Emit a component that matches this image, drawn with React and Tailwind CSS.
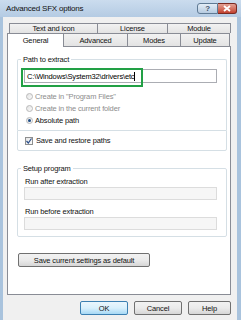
import React from "react";

const FONT = "font-['Liberation_Sans',Arial,sans-serif]";

function Radio({ label, checked, disabled }) {
  return (
    <div className="flex items-center h-[12px] pl-[8px]">
      <span className="w-[7px] h-[7px] rounded-full border border-[#b9b9b9] bg-gradient-to-br from-[#e3e3e3] to-[#fbfbfb] flex items-center justify-center">
        {checked && <span className="w-[3px] h-[3px] rounded-full bg-[#1f4d86]" />}
      </span>
      <span className={`ml-[2px] ${disabled ? "text-[#8d8d8d]" : "text-[#111]"}`}>{label}</span>
    </div>
  );
}

function Button({ children, className = "", primary }) {
  return (
    <div
      className={`h-[14px] flex items-center justify-center rounded-[2px] border bg-gradient-to-b ${
        primary
          ? "border-[#3c7fb1] from-[#eaf6fd] via-[#d9f0fc] to-[#a7d9f5]"
          : "border-[#707070] from-[#f2f2f2] via-[#ebebeb] to-[#d6d6d6]"
      } ${className}`}
    >
      {children}
    </div>
  );
}

export default function App() {
  return (
    <div className={`w-[241px] h-[320px] overflow-hidden flex flex-col bg-[#a9c3dd] text-[7.5px] leading-[9px] tracking-[-0.15px] text-[#111] ${FONT}`}>
      {/* Title bar */}
      <div className="h-[17px] flex items-start bg-gradient-to-b from-[#cbdcee] to-[#b4cbe3]">
        <span className="pl-[6px] pt-[4px] text-[8px] leading-[9px] tracking-[-0.2px] text-[#111]">Advanced SFX options</span>
        <div className="ml-auto flex pt-[3px] pr-[4px]">
          <div className="w-[21px] h-[11px] rounded-l-[3px] border border-[#5f7a94] bg-gradient-to-b from-[#e3edf7] to-[#b6cbe0] flex items-center justify-center text-[8px] leading-[8px] text-[#3d536b] font-bold">?</div>
          <div className="w-[19px] h-[11px] rounded-r-[3px] border border-l-0 border-[#7a2a22] bg-gradient-to-b from-[#e3a195] to-[#c2402f] flex items-center justify-center">
            <svg width="8" height="7" viewBox="0 0 8 7">
              <path d="M1 1 L7 6 M7 1 L1 6" stroke="#fff" strokeWidth="1.8" />
            </svg>
          </div>
        </div>
      </div>

      {/* Window body */}
      <div className="flex-1 ml-[3px] mr-[4px] bg-[#f0f0f0] pt-[6px] pl-[4px] pr-[6px]">
        {/* Tabs */}
        <div className="ml-[2px] flex h-[10px]">
          {[["Text and icon", "w-[88px]"], ["License", "w-[70px]"], ["Module", "w-[64px]"]].map(([t, w], i) => (
            <div
              key={t}
              className={`${w} flex items-center justify-center border-t border-l ${i === 2 ? "border-r" : ""} border-[#898c95] bg-gradient-to-b from-[#f2f2f2] to-[#e3e3e3]`}
            >
              {t}
            </div>
          ))}
        </div>
        <div className="ml-[2px] flex h-[13px]">
          <div className="relative z-10 w-[57px] -ml-[2px] h-[14px] flex items-center justify-center border-t border-x border-[#898c95] bg-white pb-[1px]">
            General
          </div>
          {[["Advanced", "w-[63px]"], ["Modes", "w-[53px]"], ["Update", "w-[50px]"]].map(([t, w], i) => (
            <div
              key={t}
              className={`${w} flex items-center justify-center border-t ${i === 0 ? "" : "border-l"} ${i === 2 ? "border-r" : ""} border-[#898c95] bg-gradient-to-b from-[#f2f2f2] to-[#e3e3e3]`}
            >
              {t}
            </div>
          ))}
        </div>

        {/* Panel */}
        <div className="relative h-[249px] border border-[#898c95] bg-white pl-[9px] pr-[3px]">
          {/* Path to extract */}
          <fieldset className="mt-[8px] border border-b-0 border-[#d5dfe5] pb-[4px] rounded-t-[2px]">
            <legend className="ml-[3px] px-[2px] leading-[9px]">Path to extract</legend>
            <div className="mt-[5px] ml-[6px] w-[193px] h-[14px] border border-[#abadb3] bg-white flex items-center pl-[2px] text-[#000]">
              C:\Windows\System32\drivers\etc<span className="w-px h-[9px] bg-black" />
            </div>
            <div className="mt-[7px]">
              <Radio label={'Create in "Program Files"'} disabled />
              <Radio label="Create in the current folder" disabled />
              <Radio label="Absolute path" checked />
            </div>
          </fieldset>
          <div className="h-[21px] border border-[#d5dfe5] rounded-b-[2px] flex items-center pl-[7px]">
            <span className="w-[8px] h-[8px] border border-[#8e8f8f] bg-gradient-to-br from-[#e8e8e8] to-[#fafafa] flex items-center justify-center">
              <svg width="6" height="6" viewBox="0 0 6 6">
                <path d="M0.5 3 L2.3 5 L5.5 0.5" stroke="#2b4f8a" strokeWidth="1.2" fill="none" />
              </svg>
            </span>
            <span className="ml-[3px]">Save and restore paths</span>
          </div>

          {/* Setup program */}
          <fieldset className="mt-[13px] border border-[#d5dfe5] rounded-[2px] pl-[6px] pb-[6px]">
            <legend className="ml-[-3px] px-[2px] leading-[9px]">Setup program</legend>
            <div className="mt-[3px] pl-[1px] h-[11px] flex items-center">Run after extraction</div>
            <div className="w-[193px] h-[13px] border border-[#dcdcdc] bg-[#f6f6f6]" />
            <div className="mt-[6px] pl-[1px] h-[11px] flex items-center">Run before extraction</div>
            <div className="w-[193px] h-[13px] border border-[#dcdcdc] bg-[#f6f6f6]" />
          </fieldset>

          <Button className="mt-[16px] ml-[1px] w-[132px]">Save current settings as default</Button>

          {/* annotation */}
          <div className="absolute left-[13px] top-[21px] w-[122px] h-[19px] border-2 border-[#22a045] pointer-events-none" />
        </div>

        {/* Buttons */}
        <div className="mt-[6px] flex justify-end gap-[6px]">
          <Button primary className="w-[48px]">OK</Button>
          <Button className="w-[48px]">Cancel</Button>
          <Button className="w-[43px]">Help</Button>
        </div>
      </div>
    </div>
  );
}
